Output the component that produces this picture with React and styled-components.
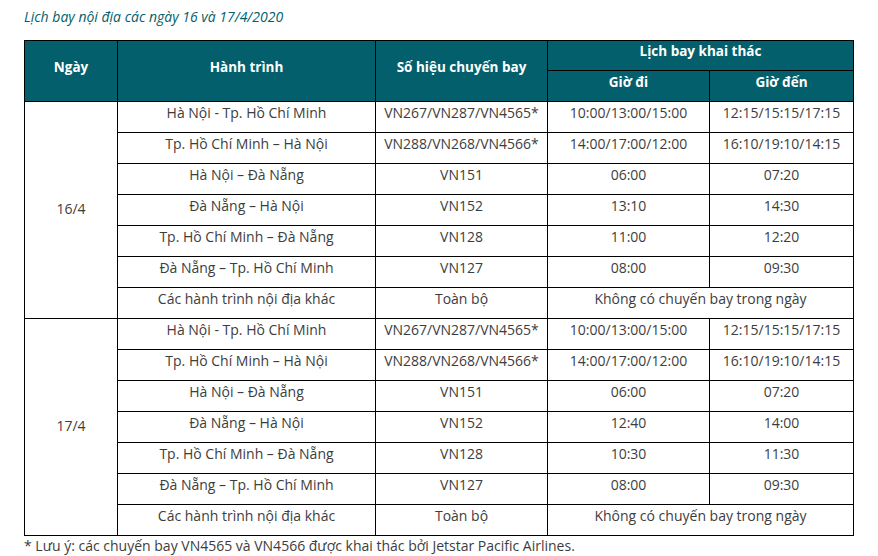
import React from "react";
import styled, { createGlobalStyle } from "styled-components";

const teal = "#035f6b";
const ink = "#3d3d3d";

const GlobalStyle = createGlobalStyle`
  body {
    margin: 0;
    background: #fff;
    font-family: "Open Sans", "Liberation Sans", sans-serif;
  }
`;

const Page = styled.div`
  padding: 8px 24px 0 24px;
  width: 829px;
`;

const Title = styled.p`
  margin: 0 0 14px 0;
  font-size: 14px;
  line-height: 18px;
  font-style: italic;
  color: ${teal};
`;

const Table = styled.table`
  border-collapse: collapse;
  width: 829px;
  table-layout: fixed;
  font-size: 14px;
  line-height: 20px;
  color: ${ink};
`;

const Head = styled.th`
  background: ${teal};
  color: #fff;
  font-size: 13.5px;
  font-weight: 700;
  border: 1px solid #000;
  height: ${(p) => p.$h || 20}px;
  padding: 0 0 9px 0;
  text-align: center;
  vertical-align: middle;
`;

const Cell = styled.td`
  border: 1px solid #000;
  height: 22px;
  padding: 0 0 8px 0;
  text-align: center;
  vertical-align: middle;
  white-space: nowrap;
`;

const DayCell = styled(Cell)`
  padding: 0 0 2px 0;
`;

const Note = styled.p`
  margin: 0;
  font-size: 14px;
  line-height: 20px;
  color: ${ink};
`;

const days = [
  {
    day: "16/4",
    rows: [
      ["Hà Nội - Tp. Hồ Chí Minh", "VN267/VN287/VN4565*", "10:00/13:00/15:00", "12:15/15:15/17:15"],
      ["Tp. Hồ Chí Minh – Hà Nội", "VN288/VN268/VN4566*", "14:00/17:00/12:00", "16:10/19:10/14:15"],
      ["Hà Nội – Đà Nẵng", "VN151", "06:00", "07:20"],
      ["Đà Nẵng – Hà Nội", "VN152", "13:10", "14:30"],
      ["Tp. Hồ Chí Minh – Đà Nẵng", "VN128", "11:00", "12:20"],
      ["Đà Nẵng – Tp. Hồ Chí Minh", "VN127", "08:00", "09:30"],
    ],
  },
  {
    day: "17/4",
    rows: [
      ["Hà Nội - Tp. Hồ Chí Minh", "VN267/VN287/VN4565*", "10:00/13:00/15:00", "12:15/15:15/17:15"],
      ["Tp. Hồ Chí Minh – Hà Nội", "VN288/VN268/VN4566*", "14:00/17:00/12:00", "16:10/19:10/14:15"],
      ["Hà Nội – Đà Nẵng", "VN151", "06:00", "07:20"],
      ["Đà Nẵng – Hà Nội", "VN152", "12:40", "14:00"],
      ["Tp. Hồ Chí Minh – Đà Nẵng", "VN128", "10:30", "11:30"],
      ["Đà Nẵng – Tp. Hồ Chí Minh", "VN127", "08:00", "09:30"],
    ],
  },
];

const App = () => (
  <Page>
    <GlobalStyle />
    <Title>Lịch bay nội địa các ngày 16 và 17/4/2020</Title>
    <Table>
      <colgroup>
        <col style={{ width: 93 }} />
        <col style={{ width: 258 }} />
        <col style={{ width: 172 }} />
        <col style={{ width: 162 }} />
        <col style={{ width: 144 }} />
      </colgroup>
      <thead>
        <tr>
          <Head rowSpan={2}>Ngày</Head>
          <Head rowSpan={2}>Hành trình</Head>
          <Head rowSpan={2}>Số hiệu chuyến bay</Head>
          <Head colSpan={2} $h={20}>Lịch bay khai thác</Head>
        </tr>
        <tr>
          <Head $h={21}>Giờ đi</Head>
          <Head $h={21}>Giờ đến</Head>
        </tr>
      </thead>
      <tbody>
        {days.map((d) => (
          <React.Fragment key={d.day}>
            {d.rows.map((r, i) => (
              <tr key={i}>
                {i === 0 && <DayCell rowSpan={7}>{d.day}</DayCell>}
                {r.map((c, j) => (
                  <Cell key={j}>{c}</Cell>
                ))}
              </tr>
            ))}
            <tr>
              <Cell>Các hành trình nội địa khác</Cell>
              <Cell>Toàn bộ</Cell>
              <Cell colSpan={2}>Không có chuyến bay trong ngày</Cell>
            </tr>
          </React.Fragment>
        ))}
      </tbody>
    </Table>
    <Note>* Lưu ý: các chuyến bay VN4565 và VN4566 được khai thác bởi Jetstar Pacific Airlines.</Note>
  </Page>
);

export default App;
